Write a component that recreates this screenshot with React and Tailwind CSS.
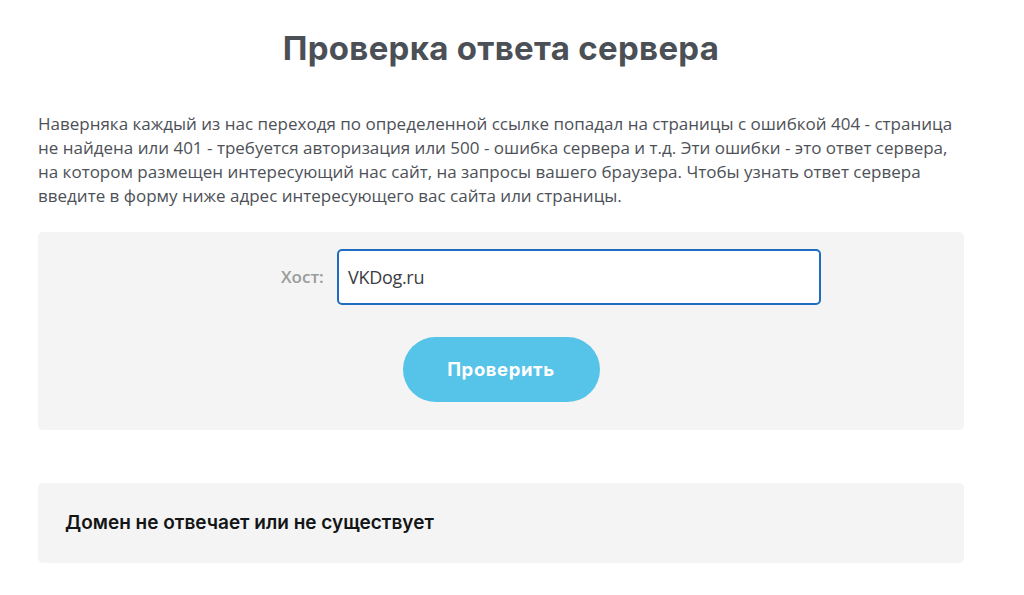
export default function App() {
  return (
    <div className="min-h-[595px] bg-white" style={{ fontFamily: '"Open Sans", "Noto Sans", sans-serif' }}>
      <div className="ml-[38px] w-[926px] pt-[28px]">
        <h1 className="text-center text-[33px] font-bold leading-[40px] tracking-[0.3px] text-[#4b4f56]" style={{ fontFamily: 'Inter, "Noto Sans", sans-serif' }}>
          Проверка ответа сервера
        </h1>
        <p className="mt-[44px] text-[17px] leading-[24px] text-[#4d5157] tracking-[0px]">
          Наверняка каждый из нас переходя по определенной ссылке попадал на страницы с ошибкой 404 - страница не найдена или 401 - требуется авторизация или 500 - ошибка сервера и т.д. Эти ошибки - это ответ сервера, на котором размещен интересующий нас сайт, на запросы вашего браузера. Чтобы узнать ответ сервера введите в форму ниже адрес интересующего вас сайта или страницы.
        </p>
        <div className="mt-[24px] h-[198px] rounded-[5px] bg-[#f3f4f3] pt-[17px]">
          <div className="flex items-center">
            <label className="ml-[243px] w-[56px] text-[17px] font-semibold text-[#9a9c9c]">Хост:</label>
            <div className="flex h-[56px] w-[484px] items-center rounded-[5px] border-2 border-[#1f6cc0] bg-white pl-[9px] text-[18px] text-[#3a3d42] tracking-[-0.3px]">
              VKDog.ru
            </div>
          </div>
          <div className="mt-[32px] flex justify-center">
            <button className="h-[65px] w-[197px] rounded-full bg-[#56c3e9] text-[18.5px] font-bold tracking-[0.6px] text-white" style={{ fontFamily: 'Inter, "Noto Sans", sans-serif' }}>
              Проверить
            </button>
          </div>
        </div>
        <div className="mt-[53px] flex h-[80px] items-center rounded-[5px] bg-[#f3f4f3] pl-[27px]">
          <span className="text-[19px] font-semibold text-[#141516]" style={{ fontFamily: 'Inter, "Noto Sans", sans-serif' }}>
            Домен не отвечает или не существует
          </span>
        </div>
      </div>
    </div>
  );
}
